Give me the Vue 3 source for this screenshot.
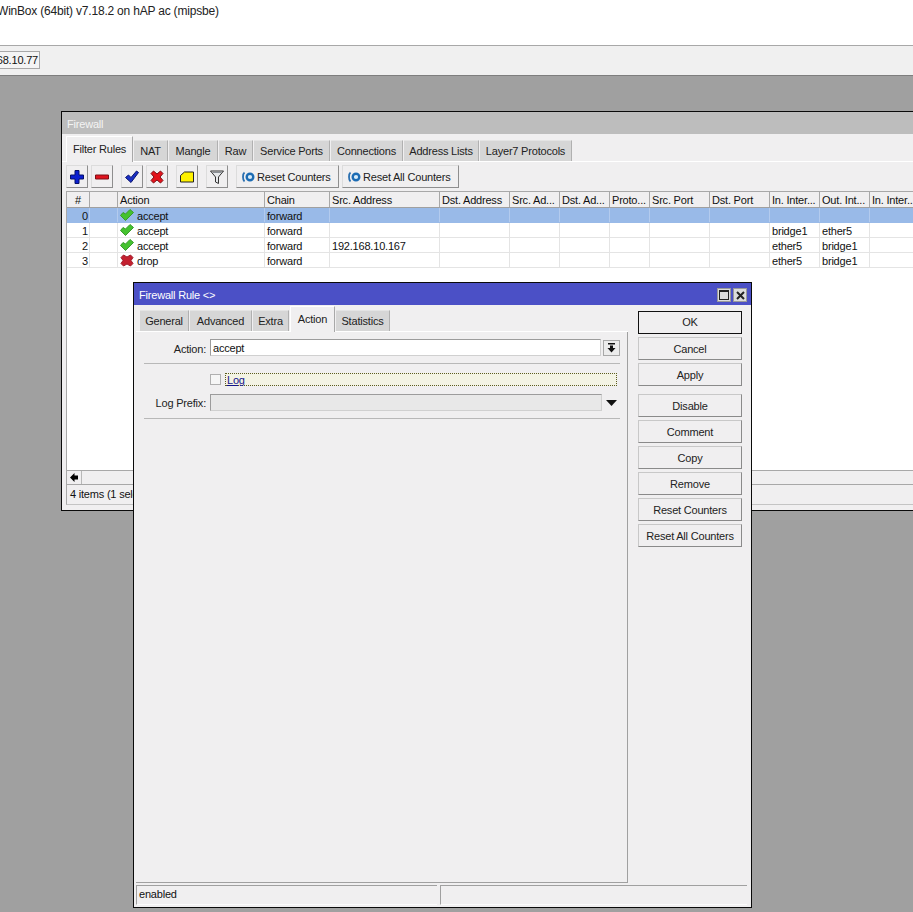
<template>
  <div class="screen">
    <header class="app-title">
      <span class="app-title__text">WinBox (64bit) v7.18.2 on hAP ac (mipsbe)</span>
    </header>
    <div class="app-bar">
      <div class="app-bar__ip"><span>192.168.10.77</span></div>
    </div>

    <main class="desktop">
      <section class="win firewall">
        <div class="win__title firewall__title">Firewall</div>
        <div class="tabs firewall__tabs">
          <div
            v-for="tab in firewallTabs"
            :key="tab.label"
            class="tab"
            :class="{ 'tab--active': tab.active }"
            :style="{ width: tab.width + 'px' }"
          >{{ tab.label }}</div>
        </div>
        <div class="fw-tools">
          <button v-for="tool in tools" :key="tool.id" class="tool" :class="'tool--' + tool.id">
            <svg width="16" height="16" viewBox="0 0 16 16">
              <path
                v-for="(p, i) in tool.paths"
                :key="i"
                :d="p.d"
                :fill="p.fill"
                :stroke="p.stroke"
                :stroke-width="p.width || 1"
              />
            </svg>
          </button>
          <button class="tool tool--text tool--reset">
            <svg width="14" height="12" viewBox="0 0 14 12">
              <path d="M3.5 1.5C1.5 3 1.5 9 3.5 10.5" fill="none" stroke="#2a6fb0" stroke-width="1.8" />
              <circle cx="9" cy="6" r="3.3" fill="#d8ecfa" stroke="#1c6cb4" stroke-width="2.4" />
            </svg>
            Reset Counters
          </button>
          <button class="tool tool--text tool--reset-all">
            <svg width="14" height="12" viewBox="0 0 14 12">
              <path d="M3.5 1.5C1.5 3 1.5 9 3.5 10.5" fill="none" stroke="#2a6fb0" stroke-width="1.8" />
              <circle cx="9" cy="6" r="3.3" fill="#d8ecfa" stroke="#1c6cb4" stroke-width="2.4" />
            </svg>
            Reset All Counters
          </button>
        </div>

        <div class="grid-wrap">
          <div class="grid-row grid-row--head">
            <div v-for="(col, i) in columns" :key="i" class="cell" :class="{ 'cell--num': i === 0 }">{{ col }}</div>
          </div>
          <div
            v-for="rule in rules"
            :key="rule.id"
            class="grid-row"
            :class="{ 'grid-row--selected': rule.id === 0 }"
          >
            <div class="cell cell--id">{{ rule.id }}</div>
            <div class="cell"></div>
            <div class="cell cell--action">
              <svg v-if="rule.action === 'accept'" width="14" height="12" viewBox="0 0 14 12">
                <path d="M0.5 6.5 3 3.5 5.5 5 10 0.5 13.5 3.5 5.5 11.5Z" fill="#45c22f" stroke="#3a9a2c" stroke-width="1" />
              </svg>
              <svg v-else width="14" height="13" viewBox="0 0 14 13">
                <path d="M1 3.5 3.5 1 7 3 10.5 1 13 3.5 11 6.5 13 9.5 10.5 12 7 10 3.5 12 1 9.5 3 6.5Z" fill="#c4202f" stroke="#a01c2a" stroke-width="1" />
              </svg>
              <span>{{ rule.action }}</span>
            </div>
            <div class="cell">forward</div>
            <div class="cell">{{ rule.src }}</div>
            <div class="cell"></div>
            <div class="cell"></div>
            <div class="cell"></div>
            <div class="cell"></div>
            <div class="cell"></div>
            <div class="cell"></div>
            <div class="cell">{{ rule.inIf }}</div>
            <div class="cell">{{ rule.outIf }}</div>
            <div class="cell"></div>
          </div>
          <div class="grid-empty"></div>
          <div class="scroll-row">
            <div class="scroll-row__btn">
              <svg width="8" height="9" viewBox="0 0 8 9"><path d="M0 4.5 4.5 0V2.5H8V6.5H4.5V9Z" fill="#000" /></svg>
            </div>
          </div>
        </div>
        <div class="fw-status">4 items (1 selected)</div>
      </section>

      <section class="win rule">
        <div class="win__title rule__title">
          <span>Firewall Rule &lt;&gt;</span>
          <div class="rule__controls">
            <span class="ctl"><i class="ctl__max"></i></span>
            <span class="ctl">
              <svg width="9" height="9" viewBox="0 0 9 9"><path d="M1 1 8 8M8 1 1 8" stroke="#222" stroke-width="2" /></svg>
            </span>
          </div>
        </div>
        <div class="rule__body">
          <div class="rule__main">
            <div class="tabs rule__tabs">
              <div
                v-for="tab in ruleTabs"
                :key="tab.label"
                class="tab"
                :class="{ 'tab--active': tab.active }"
                :style="{ width: tab.width + 'px' }"
              >{{ tab.label }}</div>
            </div>
            <div class="pane">
              <div class="field field--action">
                <label class="field__label">Action:</label>
                <div class="input">accept</div>
                <div class="drop-btn">
                  <svg width="9" height="10" viewBox="0 0 9 10">
                    <path d="M1 0H8V1.5H1ZM3 2.5H6V5H8.5L4.5 9.5 0.5 5H3Z" fill="#111" />
                  </svg>
                </div>
              </div>
              <div class="sep sep--action"></div>
              <div class="field field--log">
                <span class="field__label"></span>
                <span class="check"></span>
                <span class="log-box"><span class="log-box__text">Log</span></span>
              </div>
              <div class="field field--prefix">
                <label class="field__label">Log Prefix:</label>
                <div class="input input--off"></div>
                <svg class="prefix-arrow" width="11" height="6" viewBox="0 0 11 6"><path d="M0 0H11L5.5 6Z" fill="#111" /></svg>
              </div>
              <div class="sep sep--prefix"></div>
            </div>
          </div>
          <div class="rule__buttons">
            <button
              v-for="btn in ruleButtons"
              :key="btn.label"
              class="btn"
              :class="{ 'btn--default': btn.label === 'OK', 'btn--gap': btn.gap }"
            >{{ btn.label }}</button>
          </div>
        </div>
        <div class="rule__status">
          <div class="status-cell status-cell--left">enabled</div>
          <div class="status-cell status-cell--right"></div>
        </div>
      </section>
    </main>
  </div>
</template>

<script setup>
const firewallTabs = [
  { label: 'Filter Rules', width: 67, active: true },
  { label: 'NAT', width: 34 },
  { label: 'Mangle', width: 49 },
  { label: 'Raw', width: 34 },
  { label: 'Service Ports', width: 76 },
  { label: 'Connections', width: 72 },
  { label: 'Address Lists', width: 75 },
  { label: 'Layer7 Protocols', width: 92 }
]

const ruleTabs = [
  { label: 'General', width: 49 },
  { label: 'Advanced', width: 62 },
  { label: 'Extra', width: 36 },
  { label: 'Action', width: 45, active: true },
  { label: 'Statistics', width: 54 }
]

const tools = [
  {
    id: 'add',
    paths: [{ d: 'M6 1.5H10V6H14.5V10H10V14.5H6V10H1.5V6H6Z', fill: '#0b1fd0', stroke: '#05106a' }]
  },
  {
    id: 'remove',
    paths: [{ d: 'M1.5 6H14.5V10H1.5Z', fill: '#e0141e', stroke: '#7c1016' }]
  },
  {
    id: 'enable',
    paths: [{ d: 'M1.5 8.5 4.5 6 7 8.5 12.5 2 14.5 3.5 7 13.5Z', fill: '#1a2fc4', stroke: '#0b1670' }]
  },
  {
    id: 'disable',
    paths: [{ d: 'M2 4.5 4.5 2 8 5 11.5 2 14 4.5 11 8 14 11.5 11.5 14 8 11 4.5 14 2 11.5 5 8Z', fill: '#e3141c', stroke: '#7c1016' }]
  },
  {
    id: 'note',
    paths: [{ d: 'M1.5 6.5 5.5 3H14.5V13H1.5Z', fill: '#fff200', stroke: '#222' }]
  },
  {
    id: 'filter',
    paths: [
      { d: 'M1.5 2H14.5L9.5 8V14.5L6.5 13V8Z', fill: '#e6e8ea', stroke: '#333' },
      { d: 'M3.5 3.5H12.5', fill: 'none', stroke: '#8a8f95' }
    ]
  }
]

const columns = [
  '#', '', 'Action', 'Chain', 'Src. Address', 'Dst. Address', 'Src. Ad...', 'Dst. Ad...',
  'Proto...', 'Src. Port', 'Dst. Port', 'In. Inter...', 'Out. Int...', 'In. Inter...'
]

const rules = [
  { id: 0, action: 'accept', src: '', inIf: '', outIf: '' },
  { id: 1, action: 'accept', src: '', inIf: 'bridge1', outIf: 'ether5' },
  { id: 2, action: 'accept', src: '192.168.10.167', inIf: 'ether5', outIf: 'bridge1' },
  { id: 3, action: 'drop', src: '', inIf: 'ether5', outIf: 'bridge1' }
]

const ruleButtons = [
  { label: 'OK' },
  { label: 'Cancel' },
  { label: 'Apply' },
  { label: 'Disable', gap: true },
  { label: 'Comment' },
  { label: 'Copy' },
  { label: 'Remove' },
  { label: 'Reset Counters' },
  { label: 'Reset All Counters' }
]
</script>

<style>
html,
body {
  margin: 0;
  background: #a0a0a0;
}
</style>

<style scoped>
* {
  box-sizing: border-box;
}

.screen {
  width: 913px;
  height: 912px;
  display: flex;
  flex-direction: column;
  overflow: hidden;
  font-family: "Liberation Sans", Arial, sans-serif;
  font-size: 11px;
  letter-spacing: -0.2px;
  color: #111;
}

.app-title {
  height: 46px;
  padding: 4px 0 0;
  background: #fff;
  border-bottom: 1px solid #a8a8a8;
  font-size: 12px;
  color: #222;
  overflow: hidden;
}

.app-title__text {
  display: block;
  margin-left: -3px;
  white-space: nowrap;
}

.app-bar {
  height: 30px;
  padding-top: 5px;
  background: #f0f0f0;
  border-bottom: 1px solid #7e7e7e;
}

.app-bar__ip {
  width: 40px;
  height: 18px;
  display: flex;
  justify-content: flex-end;
  align-items: center;
  padding-right: 1px;
  border: 1px solid #a8a8a8;
  border-left: 0;
  background: #f4f4f4;
  overflow: hidden;
  white-space: nowrap;
}

.desktop {
  position: relative;
  flex: 1;
  background: #a0a0a0;
  overflow: hidden;
}

.win {
  position: absolute;
  display: flex;
  flex-direction: column;
  background: #f0eff0;
  border: 1px solid #0a0a0a;
}

.win__title {
  height: 22px;
  flex: none;
  padding: 2px 5px 0;
  display: flex;
  align-items: center;
  justify-content: space-between;
  color: #fff;
}

.firewall {
  left: 61px;
  top: 35px;
  width: 880px;
  height: 400px;
}

.firewall__title {
  background: #bdbdbd;
  color: #f4f4f4;
}

.tabs {
  display: flex;
  align-items: flex-end;
  flex: none;
  gap: 1px;
}

.firewall__tabs {
  height: 28px;
  padding-left: 4px;
  border-bottom: 1px solid #fff;
}

.tab {
  height: 21px;
  display: flex;
  align-items: center;
  justify-content: center;
  background: #d6d6d6;
  border-top: 1px solid #e4e4e4;
  border-right: 1px solid #b0b0b0;
  color: #222;
  white-space: nowrap;
}

.tab--active {
  height: 26px;
  margin-bottom: -1px;
  padding-bottom: 2px;
  background: #f0eff0;
  border-top: 1px solid #fff;
  border-left: 1px solid #fff;
  border-right: 1px solid #a8a8a8;
}

.fw-tools {
  height: 29px;
  flex: none;
  padding: 3px 0 0 4px;
  display: flex;
}

.tool {
  width: 22px;
  height: 23px;
  padding: 0;
  display: flex;
  align-items: center;
  justify-content: center;
  background: #f0eff0;
  border: 1px solid;
  border-color: #dcdcdc #8e8e8e #8e8e8e #dcdcdc;
  font: inherit;
  letter-spacing: inherit;
  color: #222;
  white-space: nowrap;
}

.tool--remove,
.tool--disable {
  margin-left: 3px;
}

.tool--enable,
.tool--note,
.tool--filter {
  margin-left: 8px;
}

.tool--text {
  width: 103px;
  margin-left: 8px;
  padding-left: 4px;
  justify-content: flex-start;
  gap: 2px;
}

.tool--reset-all {
  width: 117px;
  margin-left: 3px;
}

.grid-wrap {
  flex: none;
  margin-left: 4px;
  height: 294px;
  background: #fff;
  border-left: 1px solid #a8a8a8;
  display: flex;
  flex-direction: column;
}

.grid-row {
  height: 15px;
  flex: none;
  display: grid;
  grid-template-columns: 23px 28px 147px 65px 110px 70px 50px 50px 40px 60px 60px 50px 50px 60px;
  border-bottom: 1px solid #e4e4e4;
  line-height: 16px;
}

.grid-row--head {
  height: 17px;
  background: #f0eff0;
  border-top: 1px solid #a8a8a8;
  border-bottom: 1px solid #a0a0a0;
  line-height: 17px;
}

.grid-row--selected {
  background: #99bae8;
  border-bottom-color: #99bae8;
}

.cell {
  padding-left: 2px;
  border-right: 1px solid #e4e4e4;
  white-space: nowrap;
  overflow: hidden;
}

.grid-row--head .cell {
  border-right-color: #a8a8a8;
}

.grid-row--selected .cell {
  border-right-color: #b3cbee;
}

.cell--num {
  padding: 0;
  text-align: center;
}

.cell--id {
  padding: 0 1px 0 0;
  text-align: right;
}

.cell--action {
  display: flex;
  align-items: flex-start;
  gap: 3px;
}

.cell--action svg {
  margin-top: 1px;
}

.grid-empty {
  flex: 1;
}

.scroll-row {
  height: 15px;
  flex: none;
  background: #f0eff0;
  border-top: 1px solid #a8a8a8;
  border-bottom: 1px solid #a8a8a8;
}

.scroll-row__btn {
  width: 15px;
  height: 13px;
  display: flex;
  align-items: center;
  justify-content: center;
  border-right: 1px solid #b8b8b8;
}

.fw-status {
  height: 20px;
  margin-left: 4px;
  padding-left: 3px;
  line-height: 18px;
  border-left: 1px solid #a8a8a8;
  border-bottom: 1px solid #c4c4c4;
}

.rule {
  left: 133px;
  top: 206px;
  width: 619px;
  height: 626px;
}

.rule__title {
  background: #4b50c6;
}

.rule__controls {
  display: flex;
  gap: 2px;
  margin-right: -1px;
}

.ctl {
  width: 14px;
  height: 14px;
  display: flex;
  align-items: center;
  justify-content: center;
  background: #dcdcdc;
  border: 1px solid #9a9a9a;
}

.ctl__max {
  width: 10px;
  height: 10px;
  border: 1px solid #222;
  border-top-width: 2px;
}

.rule__body {
  flex: 1;
  display: flex;
  min-height: 0;
}

.rule__main {
  width: 494px;
  display: flex;
  flex-direction: column;
  padding-left: 2px;
}

.rule__tabs {
  height: 27px;
  padding-left: 4px;
  border-bottom: 1px solid #fff;
}

.pane {
  flex: 1;
  padding: 7px 6px 0 8px;
  border-right: 1px solid #a0a0a0;
  border-bottom: 1px solid #a0a0a0;
}

.field {
  display: flex;
  align-items: center;
  height: 17px;
}

.field__label {
  width: 62px;
  flex: none;
  text-align: right;
  margin-right: 4px;
  color: #222;
}

.field--action .field__label {
  padding-top: 2px;
}

.input {
  width: 391px;
  height: 17px;
  flex: none;
  padding-left: 2px;
  line-height: 17px;
  background: #fff;
  border: 1px solid #9c9c9c;
  border-right-color: #d0d0d0;
  border-bottom-color: #d0d0d0;
}

.input--off {
  width: 392px;
  background: #e8e8e8;
}

.drop-btn {
  width: 17px;
  height: 16px;
  margin-left: 2px;
  display: flex;
  align-items: center;
  justify-content: center;
  background: #ececec;
  border: 1px solid #a8a8a8;
}

.sep {
  height: 1px;
  width: 476px;
  background: #b8b8b8;
}

.sep--action {
  margin: 7px 0 9px;
}

.field--log {
  height: 13px;
}

.check {
  width: 11px;
  height: 11px;
  margin-right: 4px;
  background: #f6f6f6;
  border: 1px solid #b0b0b0;
}

.log-box {
  width: 392px;
  height: 13px;
  padding-left: 1px;
  display: flex;
  align-items: center;
  background: #f3f3e4;
  border: 1px dotted #5b5b20;
}

.log-box__text {
  color: #14148c;
  text-decoration: underline;
}

.field--prefix {
  margin-top: 8px;
}

.prefix-arrow {
  margin-left: 4px;
}

.sep--prefix {
  margin-top: 7px;
}

.rule__buttons {
  width: 104px;
  margin-left: 10px;
  padding-top: 6px;
  display: flex;
  flex-direction: column;
  gap: 3px;
}

.btn {
  height: 23px;
  padding: 0;
  background: #f0eff0;
  border: 1px solid;
  border-color: #c8c8c8 #8a8a8a #8a8a8a #c8c8c8;
  font: inherit;
  letter-spacing: inherit;
  color: #222;
}

.btn--default {
  padding-bottom: 1px;
  border-color: #111;
}

.btn--gap {
  margin-top: 5px;
}

.rule__status {
  height: 24px;
  flex: none;
  padding: 2px 4px 2px 2px;
  display: flex;
  gap: 3px;
}

.status-cell {
  border-top: 1px solid #a0a0a0;
  border-left: 1px solid #a0a0a0;
  border-bottom: 1px solid #fbfbfb;
  padding-left: 2px;
  line-height: 17px;
}

.status-cell--left {
  width: 301px;
}

.status-cell--right {
  flex: 1;
}
</style>
